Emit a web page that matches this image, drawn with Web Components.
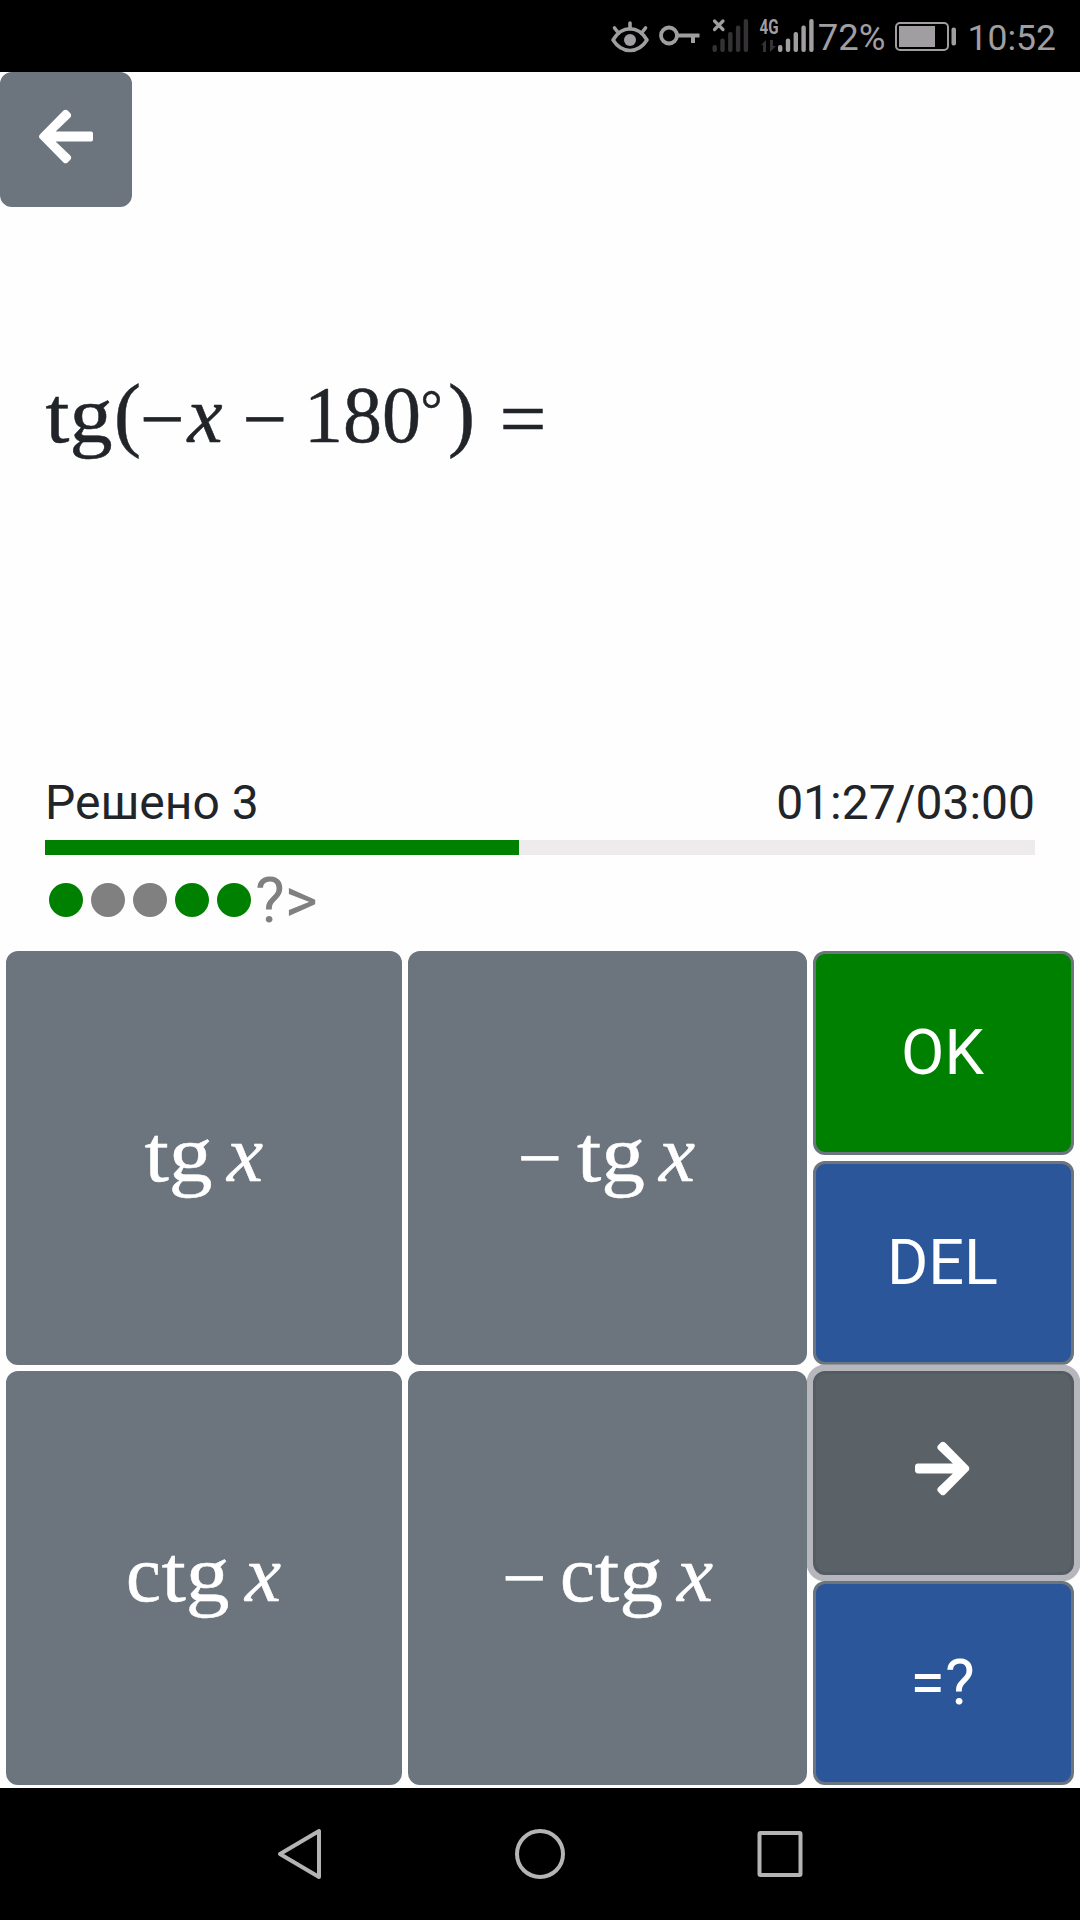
<!DOCTYPE html>
<html lang="ru">
<head>
<meta charset="utf-8">
<title>Trig trainer</title>
<style>
  html, body { margin: 0; height: 100%; }
  body { background: #fefefe; color: #212529; font-family: Roboto, sans-serif; overflow: hidden; }
</style>
</head>
<body>
<trainer-app></trainer-app>

<script>
// svg line made of math tokens: [text, x, advance, italic?, size?, baseline shift?]
const FORMULAS = {
  question: { w: 560, h: 140, base: 82, tokens: [
    ['tg', 45.5, 67], ['(', 114, 27, 0, 82, -1], ['−', 140, 44.5, 0, 80, 4], ['x', 187.5, 35, 1], ['−', 242.5, 44.5, 0, 80, 4],
    ['180', 304, 117], ['°', 420.5, 22, 0, 58, -13], [')', 448, 27, 0, 82, -1], ['=', 499.5, 47, 0, 80, 4]] },
  tg: { w: 396, h: 414, base: 230, tokens: [['tg', 138.5, 68], ['x', 221, 36, 1]] },
  mtg: { w: 399, h: 414, base: 230, tokens: [['−', 109.5, 44.5, 0, 80, 4], ['tg', 169, 68], ['x', 251, 36, 1]] },
  ctg: { w: 396, h: 414, base: 230, tokens: [['c', 120, 35], ['tg', 155.5, 68], ['x', 239, 36, 1]] },
  mctg: { w: 399, h: 414, base: 230, tokens: [['−', 94, 44.5, 0, 80, 4], ['c', 152, 35], ['tg', 187, 68], ['x', 269, 36, 1]] }
};

class MathLine extends HTMLElement {
  constructor() {
    super();
    this.attachShadow({ mode: 'open' });
  }

  connectedCallback() {
    const f = FORMULAS[this.getAttribute('name')];
    const text = f.tokens.map(([t, x, len, italic, size, dy]) =>
      `<text x="${x}" y="${f.base + (dy || 0)}" textLength="${len}" lengthAdjust="spacingAndGlyphs"
        font-size="${size || 80}" ${italic ? 'font-style="italic"' : ''}>${t}</text>`).join('');
    this.shadowRoot.innerHTML = `
    <style>
      :host { display: block; }
      svg { display: block; fill: currentColor; stroke: currentColor; stroke-width: 0.5; font-family: "Liberation Serif", serif; }
    </style>
    <svg width="${f.w}" height="${f.h}">${text}</svg>`;
  }
}

class StatusBar extends HTMLElement {
  constructor() {
    super();
    // five rounded signal bars growing to the right
    const bars = [45, 38.5, 32, 25.5, 19].map((y, i) =>
      `<rect x="${i * 7.8}" y="${y}" width="4.4" height="${52 - y}" rx="2"/>`).join('');
    this.attachShadow({ mode: 'open' }).innerHTML = `
    <style>
      :host { display: flex; align-items: stretch; justify-content: flex-end; height: 72px; box-sizing: border-box;
        padding-right: 24px; background: #000; color: #a09ea0; font-size: 36.5px; line-height: 76px; }
      svg { display: block; }
      .net { font: bold 21px/1 Roboto, sans-serif; }
      .battery { margin: 0 11px 0 9px; }
      .time { font-size: 35.5px; }
    </style>
    <svg width="208" height="72" fill="currentColor">
      <g fill="none" stroke="currentColor" stroke-width="3.6" stroke-linecap="round">
        <path d="M3 40C12 25 28 25 37 40C28 54 12 54 3 40Z" stroke-linejoin="round"/>
        <path d="M20 23v6M4.500 28l4 5M35.500 28l-4 5"/>
        <circle cx="59" cy="35.500" r="8" stroke-width="3.800"/>
        <path d="M68 35.500H89.500M83 36V43" stroke-width="4" stroke-linecap="butt"/>
        <path d="M104.500 21l8.500 8.500M113 21l-8.500 8.500" stroke-width="3.200"/>
      </g>
      <circle cx="20" cy="40" r="6"/>
      <g transform="translate(102.500 0)" fill="#343234">${bars}</g>
      <text class="net" x="149.500" y="34" textLength="19" lengthAdjust="spacingAndGlyphs">4G</text>
      <path d="M151 45l5-5v12h-3v-7zM160 40v12l6-6h-3v-6z" fill="#343234"/>
      <g transform="translate(168 0)">${bars}</g>
    </svg>
    <span>72%</span>
    <svg class="battery" width="62" height="72">
      <rect x="1" y="23" width="52" height="27" rx="4" fill="none" stroke="currentColor" stroke-width="2"/>
      <rect x="4" y="26" width="36" height="21" fill="currentColor"/>
      <rect x="56.500" y="27.500" width="4.500" height="18" rx="2" fill="currentColor"/>
    </svg>
    <span class="time">10:52</span>`;
  }
}

class ArrowIcon extends HTMLElement {
  constructor() {
    super();
    this.attachShadow({ mode: 'open' }).innerHTML = `
    <style>
      :host { display: block; }
      :host([right]) { transform: scaleX(-1); margin: 0 2px 10px 0; }
      svg { display: block; }
    </style>
    <svg width="54.500" height="63" viewBox="0 0 448 512" preserveAspectRatio="none" fill="currentColor">
      <path d="M257.500 445.100l-22.200 22.200c-9.400 9.400-24.600 9.400-33.900 0L7 273c-9.400-9.400-9.400-24.600 0-33.900L201.400 44.700c9.400-9.400 24.600-9.400 33.900 0l22.200 22.200c9.500 9.500 9.300 25-.4 34.300L136.600 216H424c13.300 0 24 10.700 24 24v32c0 13.300-10.700 24-24 24H136.600l120.500 114.800c9.800 9.300 10 24.800.4 34.300z"/>
    </svg>`;
  }
}

class KeyButton extends HTMLElement {
  constructor() {
    super();
    this.attachShadow({ mode: 'open' }).innerHTML = `
    <style>
      :host { display: flex; align-items: center; justify-content: center; box-sizing: border-box;
        border: 3px solid #6c757d; border-radius: 12px; background: #6c757d; color: #fff;
        font-size: 63px; line-height: 1; overflow: hidden; }
      :host([kind="ok"]), :host([kind="blue"]) { padding: 0 2px 2px 0; }
      :host([kind="ok"]) { background: #008000; }
      :host([kind="blue"]) { background: #2b579a; }
      :host([kind="active"]) { background: #5a6268; border-color: #545b62; box-shadow: 0 0 0 6.500px #b5b7bd; }
    </style>
    <slot></slot>`;
  }
}

class ProgressPanel extends HTMLElement {
  constructor() {
    super();
    this.attachShadow({ mode: 'open' }).innerHTML = `
    <style>
      :host { display: block; padding: 0 45px; }
      .labels { display: flex; justify-content: space-between; font-size: 48px; line-height: 72px; height: 73px; }
      .track { height: 15px; background: #eeebed; }
      .fill { width: 474px; height: 15px; background: #008000; }
      .history { display: flex; align-items: center; height: 90px; padding-left: 3.500px; color: #808080; font-size: 63px; }
      i { width: 34.500px; height: 34.500px; margin-right: 7.500px; border-radius: 50%; background: #808080; }
      i.good { background: #008000; }
      .hint { margin-left: -3.500px; line-height: 90px; padding-top: 2px; }
    </style>
    <div class="labels"><span>Решено 3</span><span>01:27/03:00</span></div>
    <div class="track"><div class="fill"></div></div>
    <div class="history">
      <i class="good"></i><i></i><i></i><i class="good"></i><i class="good"></i>
      <span class="hint">?&gt;</span>
    </div>`;
  }
}

class KeyPad extends HTMLElement {
  constructor() {
    super();
    this.attachShadow({ mode: 'open' }).innerHTML = `
    <style>
      :host { display: grid; grid-template-columns: 396px 399px 261px; gap: 6px; padding: 0 6px; height: 834px; }
      .col { display: grid; grid-auto-rows: 1fr; gap: 6px; min-height: 0; }
      .col:nth-child(-n+2) { position: relative; z-index: 1; }
      key-button:last-child { position: relative; }
    </style>
    <div class="col">
      <key-button><math-line name="tg"></math-line></key-button>
      <key-button><math-line name="ctg"></math-line></key-button>
    </div>
    <div class="col">
      <key-button><math-line name="mtg"></math-line></key-button>
      <key-button><math-line name="mctg"></math-line></key-button>
    </div>
    <div class="col">
      <key-button kind="ok">OK</key-button>
      <key-button kind="blue">DEL</key-button>
      <key-button kind="active"><arrow-icon right></arrow-icon></key-button>
      <key-button kind="blue">=?</key-button>
    </div>`;
  }
}

class NavBar extends HTMLElement {
  constructor() {
    super();
    this.attachShadow({ mode: 'open' }).innerHTML = `
    <style>
      :host { display: flex; align-items: center; justify-content: center; gap: 180px; height: 132px; background: #000; }
      svg { width: 60px; height: 60px; fill: none; stroke: #b6b3b6; stroke-width: 4; stroke-linejoin: round; }
    </style>
    <svg><path d="M10 30L49 7V53Z"/></svg>
    <svg><circle cx="30" cy="30" r="23"/></svg>
    <svg><rect x="9.500" y="9" width="41" height="42" rx="1"/></svg>`;
  }
}

class TrainerApp extends HTMLElement {
  constructor() {
    super();
    this.attachShadow({ mode: 'open' }).innerHTML = `
    <style>
      :host { display: flex; flex-direction: column; height: 1920px; width: 1080px; }
      .back { width: 132px; height: 135px; padding-bottom: 6px; }
      .task { height: 560px; padding-top: 153px; box-sizing: border-box; }
      key-pad { margin: 6px 0 3px; }
    </style>
    <status-bar></status-bar>
    <key-button class="back"><arrow-icon></arrow-icon></key-button>
    <div class="task"><math-line name="question"></math-line></div>
    <progress-panel></progress-panel>
    <key-pad></key-pad>
    <nav-bar></nav-bar>`;
  }
}

customElements.define('math-line', MathLine);
customElements.define('status-bar', StatusBar);
customElements.define('arrow-icon', ArrowIcon);
customElements.define('key-button', KeyButton);
customElements.define('progress-panel', ProgressPanel);
customElements.define('key-pad', KeyPad);
customElements.define('nav-bar', NavBar);
customElements.define('trainer-app', TrainerApp);
</script>
</body>
</html>
